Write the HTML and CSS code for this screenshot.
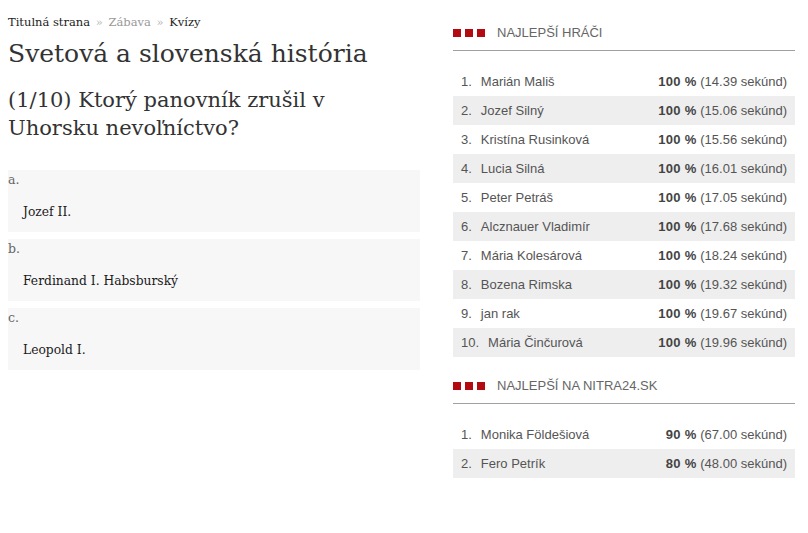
FILE: index.html
```html
<!DOCTYPE html>
<html lang="sk">
<head>
<meta charset="utf-8">
<title>Kvízy</title>
<link rel="stylesheet" href="styles.css">
</head>
<body>
<div class="page">
  <main class="quiz">
    <nav class="crumbs">
      <a class="crumb-dark" href="#">Titulná strana</a>
      <span class="sep">»</span>
      <a class="crumb-light" href="#">Zábava</a>
      <span class="sep">»</span>
      <span class="crumb-dark">Kvízy</span>
    </nav>
    <h1 class="title">Svetová a slovenská história</h1>
    <h2 class="question">(1/10) Ktorý panovník zrušil v Uhorsku nevoľníctvo?</h2>
    <div class="answers">
      <div class="answer">
        <div class="letter">a.</div>
        <div class="answer-text">Jozef II.</div>
      </div>
      <div class="answer">
        <div class="letter">b.</div>
        <div class="answer-text">Ferdinand I. Habsburský</div>
      </div>
      <div class="answer">
        <div class="letter">c.</div>
        <div class="answer-text">Leopold I.</div>
      </div>
    </div>
  </main>
  <aside class="side">
    <section class="board">
      <h3 class="board-head"><span class="marks"><i></i><i></i><i></i></span>NAJLEPŠÍ HRÁČI</h3>
      <ol class="rows">
        <li class="row"><span class="who"><span class="num">1.</span>Marián Mališ</span><span class="score"><b>100 %</b> (14.39 sekúnd)</span></li>
        <li class="row"><span class="who"><span class="num">2.</span>Jozef Silný</span><span class="score"><b>100 %</b> (15.06 sekúnd)</span></li>
        <li class="row"><span class="who"><span class="num">3.</span>Kristína Rusinková</span><span class="score"><b>100 %</b> (15.56 sekúnd)</span></li>
        <li class="row"><span class="who"><span class="num">4.</span>Lucia Silná</span><span class="score"><b>100 %</b> (16.01 sekúnd)</span></li>
        <li class="row"><span class="who"><span class="num">5.</span>Peter Petráš</span><span class="score"><b>100 %</b> (17.05 sekúnd)</span></li>
        <li class="row"><span class="who"><span class="num">6.</span>Alcznauer Vladimír</span><span class="score"><b>100 %</b> (17.68 sekúnd)</span></li>
        <li class="row"><span class="who"><span class="num">7.</span>Mária Kolesárová</span><span class="score"><b>100 %</b> (18.24 sekúnd)</span></li>
        <li class="row"><span class="who"><span class="num">8.</span>Bozena Rimska</span><span class="score"><b>100 %</b> (19.32 sekúnd)</span></li>
        <li class="row"><span class="who"><span class="num">9.</span>jan rak</span><span class="score"><b>100 %</b> (19.67 sekúnd)</span></li>
        <li class="row"><span class="who"><span class="num">10.</span>Mária Činčurová</span><span class="score"><b>100 %</b> (19.96 sekúnd)</span></li>
      </ol>
    </section>
    <section class="board board-second">
      <h3 class="board-head"><span class="marks"><i></i><i></i><i></i></span>NAJLEPŠÍ NA NITRA24.SK</h3>
      <ol class="rows">
        <li class="row"><span class="who"><span class="num">1.</span>Monika Földešiová</span><span class="score"><b>90 %</b> (67.00 sekúnd)</span></li>
        <li class="row"><span class="who"><span class="num">2.</span>Fero Petrík</span><span class="score"><b>80 %</b> (48.00 sekúnd)</span></li>
      </ol>
    </section>
  </aside>
</div>
</body>
</html>
```

FILE: styles.css
```css
* { box-sizing: border-box; }

html, body {
  margin: 0;
  padding: 0;
  background: #ffffff;
}

body {
  padding: 8px 13px 8px 8px;
}

.page {
  display: flex;
  gap: 33px;
  align-items: flex-start;
}

.quiz {
  width: 412px;
  font-family: "DejaVu Serif", Georgia, serif;
  color: #333;
}

.crumbs {
  margin-top: 6px;
  font-size: 11.5px;
  line-height: 16px;
  white-space: nowrap;
}

.crumbs a { text-decoration: none; }

.crumb-dark { color: #222; }
.crumb-light { color: #999; }
.sep { color: #bbb; margin: 0 2px; }

.title {
  margin: 8px 0 0;
  font-size: 25px;
  font-weight: normal;
  line-height: 32px;
  color: #333;
}

.question {
  margin: 16px 0 0;
  font-size: 21px;
  font-weight: normal;
  line-height: 28px;
  color: #333;
}

.answers {
  margin-top: 28px;
  display: flex;
  flex-direction: column;
  gap: 7px;
}

.answer {
  background: #f7f7f7;
  padding: 2px 0 12px;
}

.letter {
  font-size: 12.5px;
  line-height: 16px;
  color: #666;
}

.answer-text {
  margin-top: 16px;
  padding-left: 15px;
  font-size: 12.3px;
  line-height: 16px;
  color: #1a1a1a;
}

.side {
  width: 342px;
  font-family: "Liberation Sans", Arial, sans-serif;
  color: #555;
}

.board-head {
  margin: 17px 0 0;
  padding-bottom: 9px;
  border-bottom: 1px solid #a0a0a0;
  font-size: 13px;
  font-weight: normal;
  line-height: 16px;
  color: #666;
  display: flex;
  align-items: center;
}

.marks {
  display: flex;
  gap: 4px;
  margin-right: 12px;
}

.marks i {
  display: block;
  width: 8px;
  height: 8px;
  background: #b30a12;
}

.rows {
  list-style: none;
  margin: 16px 0 0;
  padding: 0;
}

.row {
  display: flex;
  justify-content: space-between;
  align-items: center;
  height: 29px;
  padding: 0 8px;
  font-size: 13px;
}

.row:nth-child(even) {
  background: #eeeeee;
}

.num {
  margin-right: 9px;
}

.score b {
  color: #444;
  letter-spacing: 0.3px;
}

.board-second .board-head {
  margin-top: 21px;
}
```
